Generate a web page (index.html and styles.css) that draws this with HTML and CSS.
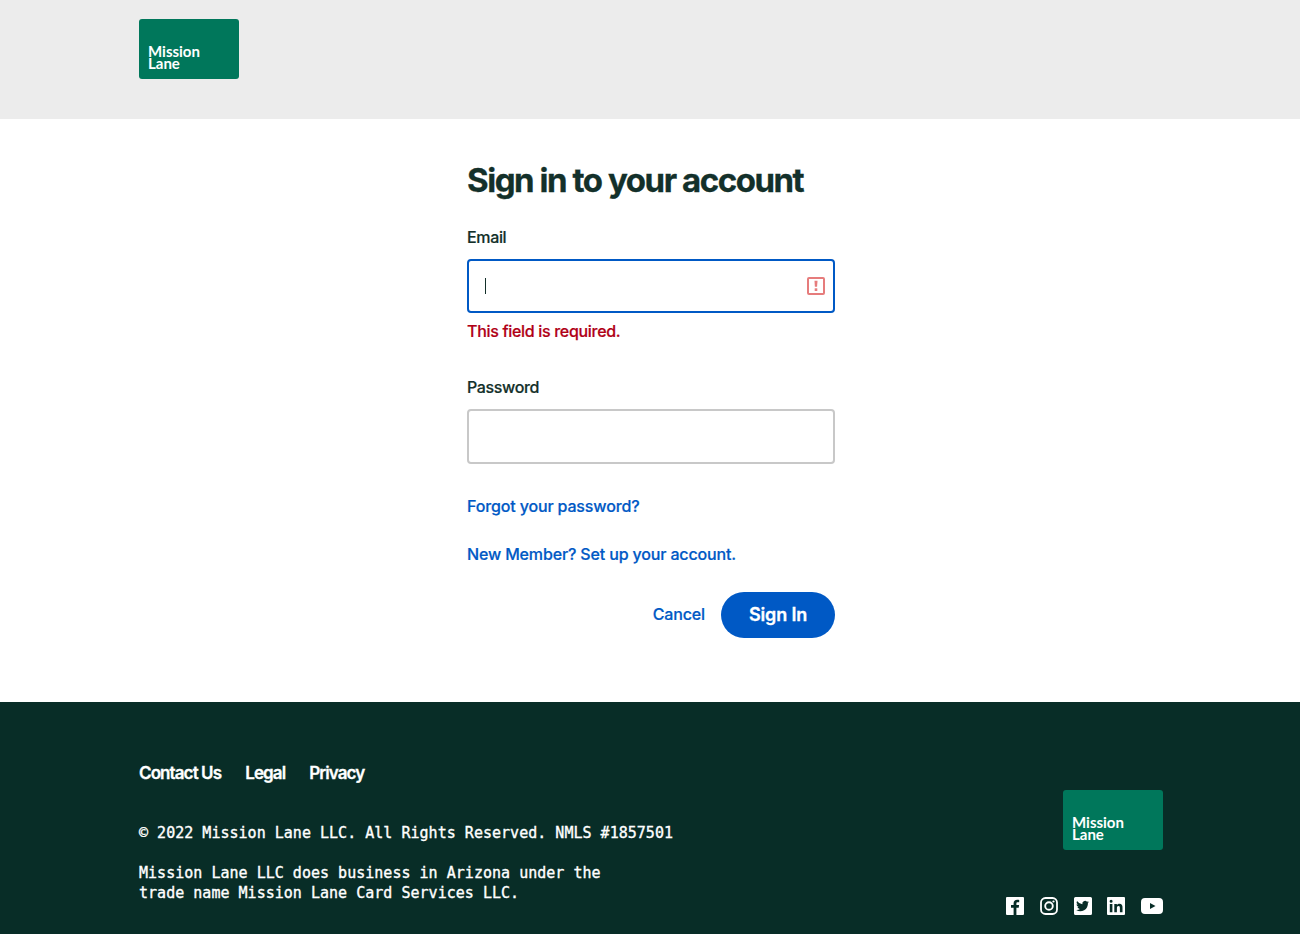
FILE: index.html
```html
<!DOCTYPE html>
<html lang="en">
<head>
<meta charset="utf-8">
<title>Sign in</title>
<link rel="stylesheet" href="styles.css">
</head>
<body>
<header class="site-header">
  <a class="logo" href="#"><span>Mission</span><span>Lane</span></a>
</header>
<main class="main">
  <form class="form">
    <h1 class="title">Sign in to your account</h1>
    <label class="label" for="email">Email</label>
    <div class="input input-focus">
      <span class="caret"></span>
      <svg class="err-icon" width="18" height="18" viewBox="0 0 18 18" aria-hidden="true">
        <rect x="1" y="1" width="16" height="16" rx="1" fill="none" stroke="#e67c7c" stroke-width="2"/>
        <path d="M7.500 3.800h3l-.4 6h-2.200z" fill="#e67c7c"/>
        <rect x="7.700" y="11.300" width="2.600" height="2.700" fill="#e67c7c"/>
      </svg>
    </div>
    <p class="error">This field is required.</p>
    <label class="label label-pass" for="pass">Password</label>
    <div class="input"></div>
    <a class="link link-forgot" href="#">Forgot your password?</a>
    <a class="link link-new" href="#">New Member? Set up your account.</a>
    <div class="actions">
      <a class="link cancel" href="#">Cancel</a>
      <button class="btn" type="button">Sign In</button>
    </div>
  </form>
</main>
<footer class="footer">
  <div class="foot-left">
    <nav class="foot-nav">
      <a href="#">Contact Us</a>
      <a href="#">Legal</a>
      <a href="#">Privacy</a>
    </nav>
    <p class="legal legal-first">© 2022 Mission Lane LLC. All Rights Reserved. NMLS #1857501</p>
    <p class="legal">Mission Lane LLC does business in Arizona under the<br>trade name Mission Lane Card Services LLC.</p>
  </div>
  <div class="foot-right">
    <a class="logo" href="#"><span>Mission</span><span>Lane</span></a>
    <div class="social">
      <svg width="18" height="18" viewBox="0 0 18 18" aria-label="Facebook"><path fill="#fff" d="M1 0h16a1 1 0 0 1 1 1v16a1 1 0 0 1-1 1h-6.600v-7.200h2.300l.4-2.700h-2.700V6.600c0-.9.300-1.300 1.300-1.300h1.500V2.900c-.4-.1-1.200-.1-2-.1-2.200 0-3.600 1.300-3.600 3.600v1.700H5v2.700h2.600V18H1a1 1 0 0 1-1-1V1a1 1 0 0 1 1-1z"/></svg>
      <svg width="18" height="18" viewBox="0 0 18 18" aria-label="Instagram"><rect x="1" y="1" width="16" height="16" rx="4.500" fill="none" stroke="#fff" stroke-width="1.800"/><circle cx="9" cy="9" r="3.800" fill="none" stroke="#fff" stroke-width="1.900"/><circle cx="13.500" cy="4.500" r="1.100" fill="#fff"/></svg>
      <svg width="18" height="18" viewBox="0 0 18 18" aria-label="Twitter"><path fill="#fff" fill-rule="evenodd" d="M1.500 0h15A1.500 1.500 0 0 1 18 1.500v15a1.500 1.500 0 0 1-1.500 1.500h-15A1.500 1.500 0 0 1 0 16.500v-15A1.500 1.500 0 0 1 1.500 0zM15 5.100c-.5.200-1 .4-1.500.4.500-.3 1-.8 1.200-1.400-.5.300-1.100.5-1.700.6a2.700 2.700 0 0 0-4.600 2.500A7.600 7.600 0 0 1 3 4a2.700 2.700 0 0 0 .8 3.600c-.4 0-.8-.1-1.200-.3 0 1.300.9 2.400 2.100 2.700-.4.100-.8.100-1.200 0 .3 1.100 1.300 1.900 2.500 1.900A5.400 5.400 0 0 1 2.200 13a7.600 7.600 0 0 0 11.700-6.800c.4-.3.800-.7 1.100-1.100z"/></svg>
      <svg width="18" height="18" viewBox="0 0 18 18" aria-label="LinkedIn"><path fill="#fff" fill-rule="evenodd" d="M1 0h16a1 1 0 0 1 1 1v16a1 1 0 0 1-1 1H1a1 1 0 0 1-1-1V1a1 1 0 0 1 1-1zm1.800 7v8.300h2.600V7H2.800zm1.300-4.200a1.500 1.500 0 1 0 0 3 1.500 1.500 0 0 0 0-3zM7.300 7v8.300h2.600v-4.100c0-1.100.2-2.200 1.600-2.200s1.400 1.300 1.400 2.300v4h2.600v-4.600c0-2.200-.5-3.900-3.100-3.900-1.200 0-2.100.7-2.500 1.300V7H7.300z"/></svg>
      <svg width="22" height="16" viewBox="0 0 22 16" aria-label="YouTube"><path fill="#fff" fill-rule="evenodd" d="M4 0h14a4 4 0 0 1 4 4v8a4 4 0 0 1-4 4H4a4 4 0 0 1-4-4V4a4 4 0 0 1 4-4zm5 5v6l5.500-3L9 5z"/></svg>
    </div>
  </div>
</footer>
</body>
</html>
```

FILE: styles.css
```css
* { box-sizing: border-box; }
html, body { margin: 0; padding: 0; }
body {
  font-family: Inter, "Liberation Sans", sans-serif;
  color: #13302a;
  background: #fff;
  min-height: 934px;
  display: flex;
  flex-direction: column;
  overflow: hidden;
}
a { text-decoration: none; }

.site-header {
  height: 119px;
  background: #ececec;
  padding: 19px 139px 0;
}
.logo {
  width: 100px;
  height: 60px;
  background: #00775b;
  border-radius: 3px;
  color: #fff;
  font-family: Lato, sans-serif;
  font-weight: 700;
  font-size: 15px;
  line-height: 12px;
  padding: 0 0 10px 9px;
  display: flex;
  flex-direction: column;
  justify-content: flex-end;
}

.main {
  height: 583px;
  display: flex;
  justify-content: center;
  padding-left: 2px;
}
.form {
  width: 368px;
  display: flex;
  flex-direction: column;
}
.title {
  margin: 40px 0 0;
  font-size: 33px;
  line-height: 42px;
  font-weight: 700;
  letter-spacing: -1.450px;
  white-space: nowrap;
  -webkit-text-stroke: 0.300px currentColor;
}
.label {
  margin-top: 24px;
  font-size: 16px;
  line-height: 24px;
  font-weight: 500;
  letter-spacing: -0.350px;
  -webkit-text-stroke: 0.200px currentColor;
}
.label-pass { margin-top: 32px; }
.input {
  margin-top: 10px;
  height: 55px;
  border: 2px solid #c8c8c8;
  border-radius: 4px;
  background: #fff;
  display: flex;
  align-items: center;
  justify-content: space-between;
  padding: 0 8px 0 16px;
}
.input-focus {
  height: 54px;
  border-color: #0059c5;
}
.caret {
  width: 1px;
  height: 16px;
  background: #13302a;
}
.error {
  margin: 6px 0 0;
  font-size: 16px;
  line-height: 24px;
  font-weight: 500;
  letter-spacing: -0.310px;
  color: #b00016;
  -webkit-text-stroke: 0.200px currentColor;
}
.link {
  color: #0059c5;
  font-size: 16px;
  line-height: 24px;
  font-weight: 500;
  letter-spacing: -0.150px;
  -webkit-text-stroke: 0.200px currentColor;
}
.link-forgot { margin-top: 30px; }
.link-new { margin-top: 24px; }
.actions {
  margin-top: 26px;
  display: flex;
  justify-content: flex-end;
  align-items: center;
  gap: 16px;
}
.cancel { margin-bottom: 2px; }
.btn {
  width: 114px;
  height: 46px;
  border: 0;
  border-radius: 23px;
  padding: 0 0 2px;
  background: #0059c5;
  color: #fff;
  font-family: inherit;
  font-size: 18px;
  font-weight: 600;
  letter-spacing: -0.150px;
  -webkit-text-stroke: 0.300px currentColor;
}

.footer {
  height: 232px;
  background: #082d27;
  padding: 0 137px 0 139px;
  display: flex;
  justify-content: space-between;
  color: #fff;
}
.foot-nav {
  margin-top: 59px;
  display: flex;
  gap: 24px;
}
.foot-nav a {
  color: #fff;
  font-size: 17px;
  line-height: 24px;
  font-weight: 600;
  letter-spacing: -0.900px;
  -webkit-text-stroke: 0.300px currentColor;
}
.legal {
  margin: 20px 0 0;
  font-family: "DejaVu Sans Mono", "Liberation Mono", monospace;
  font-size: 15px;
  line-height: 20px;
  letter-spacing: 0.020px;
  -webkit-text-stroke: 0.350px #fff;
}
.legal-first { margin-top: 38px; }
.foot-right {
  display: flex;
  flex-direction: column;
  align-items: flex-end;
  padding-top: 88px;
}
.social {
  margin-top: 46.500px;
  display: flex;
  align-items: center;
  gap: 15.750px;
}
```
